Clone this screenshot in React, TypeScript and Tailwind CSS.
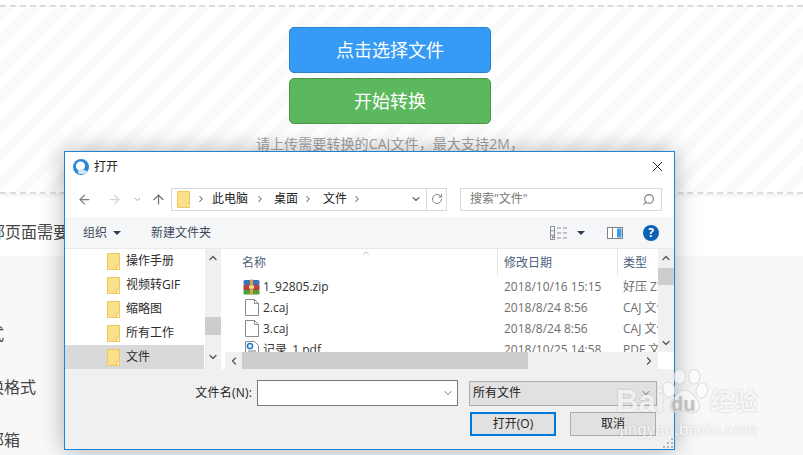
import { ChevronDown, ChevronLeft, ChevronRight, ChevronUp, X, RotateCw, Search, ArrowLeft, ArrowRight, ArrowUp } from "lucide-react";

const font = "font-['Open_Sans','Noto_Sans_CJK_SC',sans-serif]";

const Folder = () => (
  <svg width="13" height="17" viewBox="0 0 13 17" className="shrink-0">
    <path d="M.5.5h12v16H.5z" fill="#fbe08c" stroke="#f0c95c" />
    <path d="M9.500 16.500v-4h3v4z" fill="#fdf0c0" stroke="#f0c95c" />
  </svg>
);

const FileIcon = () => (
  <svg width="14" height="17" viewBox="0 0 14 17" className="shrink-0">
    <path d="M.5.5h9l4 4v12H.5z" fill="#fff" stroke="#8a8a8a" />
    <path d="M9.500.5v4h4" fill="none" stroke="#8a8a8a" />
  </svg>
);

const ZipIcon = () => (
  <svg width="17" height="16" viewBox="0 0 17 16" className="shrink-0">
    <rect x="0.500" y="1" width="16" height="5" rx="1.500" fill="#3f6fb5" />
    <rect x="0.500" y="6" width="16" height="5" fill="#b4443a" />
    <rect x="0.500" y="11" width="16" height="4.500" rx="1" fill="#4f9e3c" />
    <rect x="7" y="0.500" width="3" height="15" fill="#d9a53a" />
    <rect x="6" y="6.500" width="5" height="3" fill="#f3d98a" />
  </svg>
);

const PdfIcon = () => (
  <svg width="14" height="17" viewBox="0 0 14 17" className="shrink-0">
    <path d="M.5.5h9l4 4v12H.5z" fill="#fff" stroke="#8a8a8a" />
    <circle cx="5" cy="5" r="2.600" fill="none" stroke="#1f78c8" strokeWidth="1.500" />
    <path d="M3 10h8M3 12.500h8" stroke="#777" />
  </svg>
);

const ViewIcon = () => (
  <svg width="18" height="14" viewBox="0 0 18 14" className="shrink-0">
    <path d="M.5.5h4v13h-4zM.5 4.800h4M.5 9.200h4" fill="none" stroke="#8a8f96" />
    <rect x="2" y="10.500" width="1.500" height="1.500" fill="#c0392b" />
    <path d="M7 2h4M13 2h4M7 7h4M13 7h4M7 12h4M13 12h4" stroke="#8a8f96" />
  </svg>
);

const PaneIcon = () => (
  <svg width="16" height="12" viewBox="0 0 16 12" className="shrink-0">
    <rect x="0.500" y="0.500" width="15" height="11" fill="#fff" stroke="#7d8288" />
    <path d="M5.500 0v12" stroke="#7d8288" />
    <rect x="10" y="1.500" width="4.500" height="9" fill="#3f9be8" />
  </svg>
);

const AppLogo = () => (
  <svg width="16" height="16" viewBox="0 0 16 16" className="shrink-0">
    <circle cx="8" cy="8" r="8" fill="#2f86d6" />
    <circle cx="7.500" cy="7" r="4.600" fill="#fff" />
    <path d="M5 13c0-2 1.500-3 3-3 1 0 2 .4 2.600 1.300 1.800-.3 3.400.3 3.400 1.700 0 1.500-1.500 2-3 2H7c-1.200 0-2-.8-2-2z" fill="#cfe6f8" />
  </svg>
);

const Paw = () => (
  <svg width="46" height="46" viewBox="0 0 60 60" className="shrink-0">
    <g fill="#ffffff" fillOpacity="0.6" stroke="#cfcfcf" strokeOpacity="0.6" strokeWidth="1.500">
      <ellipse cx="9" cy="27" rx="8" ry="10" transform="rotate(-12 9 27)" />
      <ellipse cx="23" cy="10" rx="7.500" ry="9.500" />
      <ellipse cx="42" cy="10" rx="7.500" ry="9.500" />
      <ellipse cx="52" cy="28" rx="7.500" ry="10" transform="rotate(12 52 28)" />
      <path d="M30 28c8 0 11 7 16 12 6 7 2 17-7 17-4 0-6-2-9-2s-6 2-10 2c-9 0-12-10-6-17 5-5 8-12 16-12z" />
    </g>
  </svg>
);

const treeRows = ["操作手册", "视频转GIF", "缩略图", "所有工作", "文件"];

const fileRows = [
  { icon: <ZipIcon />, name: "1_92805.zip", date: "2018/10/16 15:15", type: "好压 ZIP", cell: "pl-[18px] gap-[3px]" },
  { icon: <FileIcon />, name: "2.caj", date: "2018/8/24 8:56", type: "CAJ 文件", cell: "pl-[20px] gap-[4px]" },
  { icon: <FileIcon />, name: "3.caj", date: "2018/8/24 8:56", type: "CAJ 文件", cell: "pl-[20px] gap-[4px]" },
  { icon: <PdfIcon />, name: "记录_1.pdf", date: "2018/10/25 14:58", type: "PDF 文件", cell: "pl-[20px] gap-[4px]" },
];

const OpenDialog = () => (
  <div className="absolute left-[64px] top-[151px] w-[611px] h-[299px] flex flex-col border border-[#1a84d8] bg-white text-[12px] shadow-[0_0_22px_rgba(0,0,0,0.3)]">
    <div className="h-[29px] shrink-0 flex items-center pl-[8px] pr-[8px] gap-[5px] text-[12px] text-[#222]">
      <AppLogo />
      <span>打开</span>
      <X size={17} strokeWidth={1.2} className="ml-auto text-black" />
    </div>

    <div className="h-[36px] shrink-0 flex items-center pl-[12px]">
      <ArrowLeft size={15} strokeWidth={2} className="text-[#7d7d7d]" />
      <ArrowRight size={15} strokeWidth={2} className="ml-[15px] text-[#d5d5d5]" />
      <ChevronDown size={9} strokeWidth={2.5} className="ml-[11px] text-[#9a9a9a]" />
      <ArrowUp size={15} strokeWidth={2} className="ml-[9px] text-[#6f6f6f]" />
      <div className="ml-[5px] w-[276px] h-[23px] flex items-center border border-[#d9d9d9] pl-[5px]">
        <Folder />
        <ChevronRight size={10} strokeWidth={2.5} className="ml-[6px] text-[#666]" />
        <span className="ml-[6px] text-[#222]">此电脑</span>
        <ChevronRight size={10} strokeWidth={2.5} className="ml-[7px] text-[#666]" />
        <span className="ml-[9px] text-[#222]">桌面</span>
        <ChevronRight size={10} strokeWidth={2.5} className="ml-[5px] text-[#666]" />
        <span className="ml-[10px] text-[#222]">文件</span>
        <ChevronRight size={10} strokeWidth={2.5} className="ml-[5px] text-[#666]" />
        <ChevronDown size={12} strokeWidth={2.2} className="ml-auto mr-[4px] text-[#666]" />
        <div className="w-[20px] h-full flex items-center justify-center border-l border-[#d9d9d9]">
          <RotateCw size={12} strokeWidth={1.8} className="text-[#777]" />
        </div>
      </div>
      <div className="ml-[13px] w-[202px] h-[23px] flex items-center justify-between border border-[#d9d9d9] pl-[9px] pr-[6px] text-[#777]">
        <span>搜索"文件"</span>
        <Search size={13} strokeWidth={2} className="text-[#777] -scale-x-100" />
      </div>
    </div>

    <div className="h-[32px] shrink-0 flex items-center bg-[#f5f6f7] border-b border-[#e9e9e9] pl-[18px] text-[#3d4a5c]">
      <span>组织</span>
      <span className="ml-[6px] w-0 h-0 border-x-[4px] border-x-transparent border-t-[4px] border-t-[#2b3a55]" />
      <span className="ml-[30px]">新建文件夹</span>
      <div className="ml-auto flex items-center pr-[15px]">
        <ViewIcon />
        <span className="ml-[9px] w-0 h-0 border-x-[4px] border-x-transparent border-t-[4px] border-t-[#2b3a55]" />
        <span className="ml-[22px]"><PaneIcon /></span>
        <span className="ml-[20px] w-[16px] h-[16px] rounded-full bg-[#0a62b5] text-white text-[12px] font-bold flex items-center justify-center">?</span>
      </div>
    </div>

    <div className="h-[120px] shrink-0 flex overflow-hidden">
      <div className="w-[139px] shrink-0 flex flex-col">
        {treeRows.map((row) => (
          <div key={row} className={`h-[24px] shrink-0 flex items-center pl-[42px] gap-[6px] text-[#2c2c2c] ${row === "文件" ? "bg-[#d9d9d9]" : ""}`}>
            <Folder />
            <span>{row}</span>
          </div>
        ))}
      </div>
      <div className="w-[16px] shrink-0 flex flex-col items-center bg-[#f0f0f0] ml-px">
        <ChevronUp size={12} strokeWidth={2.5} className="mt-[3px] text-[#555]" />
        <div className="mt-[53px] w-full h-[18px] bg-[#cdcdcd]" />
        <ChevronDown size={12} strokeWidth={2.5} className="mt-[16px] text-[#555]" />
      </div>
      <div className="w-[4px] shrink-0" />
      <div className="flex-1 min-w-0 flex flex-col">
        <div className="flex h-[103px] shrink-0">
          <div className="flex-1 min-w-0 overflow-hidden">
            <div className="relative h-[27px] grid grid-cols-[272px_120px_60px] items-center text-[#4c607a]">
              <ChevronUp size={10} strokeWidth={1.5} className="absolute left-[136px] top-[-1px] text-[#888]" />
              <span className="pl-[17px]">名称</span>
              <span className="h-full flex items-center pl-[6px] border-l border-[#e5e5e5]">修改日期</span>
              <span className="h-full flex items-center pl-[5px] border-l border-[#e5e5e5]">类型</span>
            </div>
            {fileRows.map((row) => (
              <div key={row.name} className="h-[21px] grid grid-cols-[272px_120px_60px] items-center whitespace-nowrap">
                <span className={`flex items-center text-[#333] ${row.cell}`}>
                  {row.icon}
                  {row.name}
                </span>
                <span className="pl-[7px] text-[#6d6d6d]">{row.date}</span>
                <span className="pl-[6px] text-[#6d6d6d] overflow-hidden">{row.type}</span>
              </div>
            ))}
          </div>
          <div className="w-[16px] shrink-0 flex flex-col items-center bg-[#f0f0f0]">
            <ChevronUp size={12} strokeWidth={2.5} className="mt-[3px] text-[#555]" />
            <div className="mt-[4px] w-full h-[17px] bg-[#cdcdcd]" />
            <ChevronDown size={12} strokeWidth={2.5} className="mt-auto mb-[3px] text-[#555]" />
          </div>
        </div>
        <div className="flex h-[17px] shrink-0">
          <div className="flex-1 flex items-center bg-[#f0f0f0]">
            <div className="w-[17px] shrink-0 flex justify-center"><ChevronLeft size={12} strokeWidth={2.5} className="text-[#555]" /></div>
            <div className="w-[286px] h-[17px] shrink-0 bg-[#cdcdcd]" />
            <ChevronRight size={12} strokeWidth={2.5} className="ml-auto mr-[3px] text-[#555]" />
          </div>
          <div className="w-[16px] shrink-0 bg-white" />
        </div>
      </div>
    </div>

    <div className="relative flex-1 bg-[#f0f0f0] pt-[11px] text-[#222]">
      <div className="flex items-center">
        <span className="w-[187px] text-right tracking-[0.2px]">文件名(N):</span>
        <div className="ml-[5px] w-[201px] h-[26px] flex items-center justify-end bg-white border border-[#7a7a7a] pr-[3px]">
          <ChevronDown size={12} strokeWidth={1.6} className="text-[#555]" />
        </div>
        <div className="ml-[11px] w-[188px] h-[25px] flex items-center justify-between bg-[#e1e1e1] border border-[#adadad] pl-[3px] pr-[4px]">
          <span>所有文件</span>
          <ChevronDown size={12} strokeWidth={1.6} className="text-[#555]" />
        </div>
      </div>
      <div className="mt-[6px] ml-[405px] flex gap-[14px]">
        <button className="w-[86px] h-[24px] flex items-center justify-center bg-[#e1e1e1] border-2 border-[#0078d7]">打开(O)</button>
        <button className="w-[86px] h-[24px] flex items-center justify-center bg-[#e1e1e1] border border-[#adadad]">取消</button>
      </div>
      <svg width="10" height="10" viewBox="0 0 10 10" className="absolute right-[1px] bottom-[1px]">
        <path d="M8 0h2v2H8zM4 4h2v2H4zM8 4h2v2H8zM0 8h2v2H0zM4 8h2v2H4zM8 8h2v2H8z" fill="#b5b5b5" />
      </svg>
    </div>
  </div>
);

const Watermark = () => (
  <div className="absolute left-[616px] top-[369px] w-[146px] h-[70px] [text-shadow:0_0_2px_rgba(0,0,0,0.22)]">
    <div className="absolute left-[46px] top-0"><Paw /></div>
    <span className="absolute left-0 top-[17px] text-[31px] leading-[32px] font-['Liberation_Sans',sans-serif] font-bold text-white/80">Bai</span>
    <span className="absolute left-[55px] top-[24px] text-[20px] leading-[22px] font-['Liberation_Sans',sans-serif] font-bold text-[#bdbdbd]/70">du</span>
    <span className="absolute left-[94px] top-[18px] text-[24px] leading-[28px] font-bold text-white/85">经验</span>
    <span className="absolute left-[4px] top-[52px] text-[16px] leading-[18px] tracking-[0.5px] font-['Liberation_Sans',sans-serif] text-white/85 whitespace-nowrap">jingyan.baidu.com</span>
  </div>
);

export default function App() {
  return (
    <div className={`relative w-[803px] h-[455px] overflow-hidden bg-white ${font}`}>
      <div className="mt-[5px] h-[189px] flex flex-col items-center pr-[23px] border-y-2 border-dashed border-[#dcdcdc] bg-[repeating-linear-gradient(135deg,#fafafa_0px,#fafafa_10px,#ffffff_10px,#ffffff_20px)] shadow-[0_2px_4px_rgba(0,0,0,0.06)]">
        <button className="mt-[20px] w-[202px] h-[46px] rounded-[5px] bg-[#359bf4] border border-[#2a82d2] text-white text-[18px]">点击选择文件</button>
        <button className="mt-[5px] w-[202px] h-[46px] rounded-[5px] bg-[#5cb85c] border border-[#4b964b] text-white text-[18px]">开始转换</button>
        <p className="mt-[9px] text-[14px] tracking-[0.1px] text-[#a3a3a3]">请上传需要转换的CAJ文件，最大支持2M，</p>
      </div>

      <div className="h-[62px] pt-[14px] flex items-center text-[16px] text-[#444] whitespace-nowrap">
        <span className="-ml-[11px]">部页面需要</span>
      </div>

      <div className="h-[199px] bg-[#f8f8f8] pt-[67px] text-[16px] leading-[22px] text-[#444] whitespace-nowrap">
        <p className="-ml-[12px]">式</p>
        <p className="mt-[31px] -ml-[12px]">换格式</p>
        <p className="mt-[31px] -ml-[12px]">邮箱</p>
      </div>

      <OpenDialog />
      <Watermark />
    </div>
  );
}
